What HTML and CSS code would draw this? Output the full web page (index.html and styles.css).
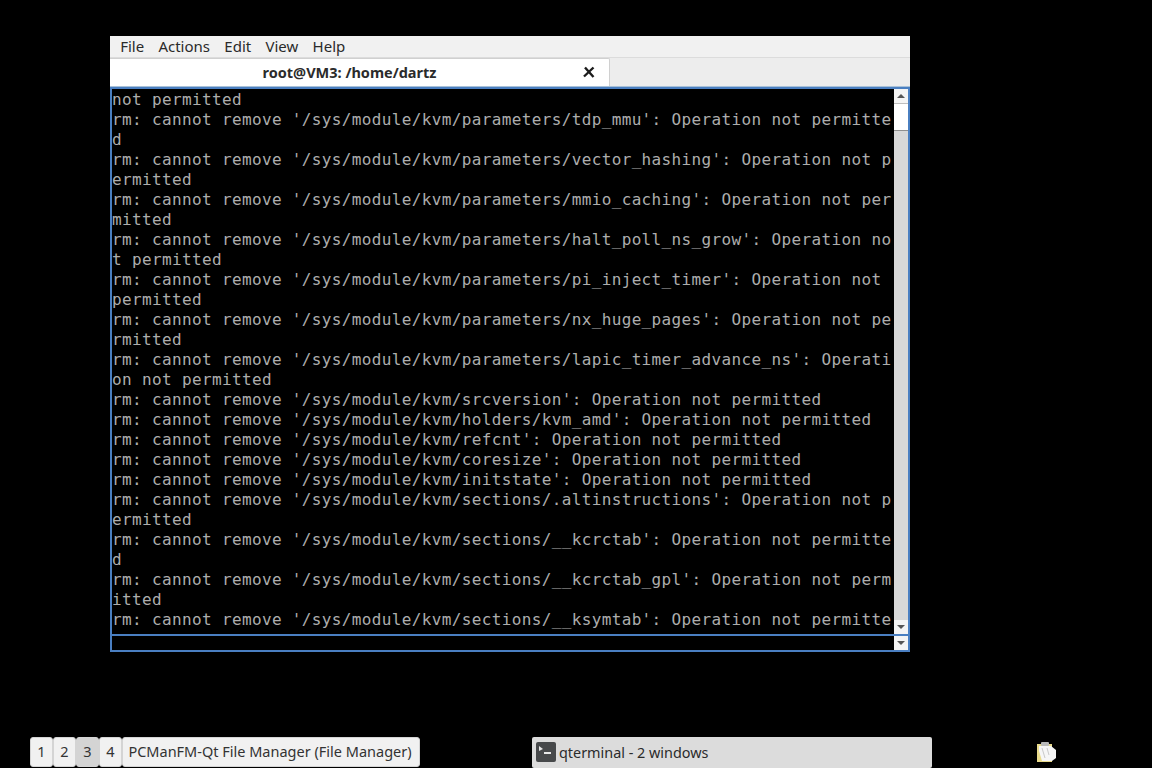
FILE: index.html
```html
<!DOCTYPE html>
<html lang="en">
<head>
<meta charset="utf-8">
<title>qterminal</title>
<link rel="stylesheet" href="styles.css">
</head>
<body>
<main class="desktop">
  <section class="window">
    <nav class="menubar">
      <span class="menu-item">File</span>
      <span class="menu-item">Actions</span>
      <span class="menu-item">Edit</span>
      <span class="menu-item">View</span>
      <span class="menu-item">Help</span>
    </nav>
    <div class="tabbar">
      <div class="tab">
        <span class="tab-title">root@VM3: /home/dartz</span>
        <svg class="tab-close" width="14" height="14" viewBox="0 0 14 14"><path d="M3 2.5 L11.5 12 M11.5 2.5 L2 11.5" stroke="#1c1c1c" stroke-width="2.4" fill="none"/></svg>
      </div>
    </div>
    <div class="terminal">
<pre class="output">not permitted
rm: cannot remove '/sys/module/kvm/parameters/tdp_mmu': Operation not permitte
d
rm: cannot remove '/sys/module/kvm/parameters/vector_hashing': Operation not p
ermitted
rm: cannot remove '/sys/module/kvm/parameters/mmio_caching': Operation not per
mitted
rm: cannot remove '/sys/module/kvm/parameters/halt_poll_ns_grow': Operation no
t permitted
rm: cannot remove '/sys/module/kvm/parameters/pi_inject_timer': Operation not
permitted
rm: cannot remove '/sys/module/kvm/parameters/nx_huge_pages': Operation not pe
rmitted
rm: cannot remove '/sys/module/kvm/parameters/lapic_timer_advance_ns': Operati
on not permitted
rm: cannot remove '/sys/module/kvm/srcversion': Operation not permitted
rm: cannot remove '/sys/module/kvm/holders/kvm_amd': Operation not permitted
rm: cannot remove '/sys/module/kvm/refcnt': Operation not permitted
rm: cannot remove '/sys/module/kvm/coresize': Operation not permitted
rm: cannot remove '/sys/module/kvm/initstate': Operation not permitted
rm: cannot remove '/sys/module/kvm/sections/.altinstructions': Operation not p
ermitted
rm: cannot remove '/sys/module/kvm/sections/__kcrctab': Operation not permitte
d
rm: cannot remove '/sys/module/kvm/sections/__kcrctab_gpl': Operation not perm
itted
rm: cannot remove '/sys/module/kvm/sections/__ksymtab': Operation not permitte</pre>
      <div class="scrollbar">
        <div class="sb-btn"><span class="arrow-up"></span></div>
        <div class="sb-thumb"></div>
        <div class="sb-track"></div>
        <div class="sb-btn"><span class="arrow-down"></span></div>
      </div>
    </div>
    <div class="inputbar">
      <div class="input-field"></div>
      <div class="sb-btn combo"><span class="arrow-down"></span></div>
    </div>
  </section>
  <footer class="panel">
    <div class="pager">
      <span class="desk">1</span>
      <span class="desk">2</span>
      <span class="desk active">3</span>
      <span class="desk">4</span>
      <span class="desk app">PCManFM-Qt File Manager (File Manager)</span>
    </div>
    <div class="task">
      <svg class="task-icon" width="20" height="20" viewBox="0 0 20 20"><rect width="20" height="20" rx="2" fill="#47494b"/><path d="M3 4 L7 7 L3 9" fill="#e8e8e8"/><rect x="8" y="10" width="7" height="2" fill="#e8e8e8"/></svg>
      <span>qterminal - 2 windows</span>
    </div>
    <svg class="tray" width="22" height="22" viewBox="0 0 22 22">
      <rect x="1" y="3" width="15" height="18" fill="#eadb8c"/>
      <rect x="5" y="1" width="8" height="4" rx="1" fill="#b9b9b9"/>
      <path d="M3 5 H15 L20 9 V17 L16 20 H6 L3 10 Z" fill="#f6f6f6"/>
      <path d="M6 7 L9 17 M11 7 L13 14" stroke="#c9c9c9" stroke-width="1" fill="none"/>
    </svg>
  </footer>
</main>
</body>
</html>
```
FILE: styles.css
```css
* { box-sizing: border-box; }
html, body { margin: 0; padding: 0; background: #000; }
.desktop {
  width: 1152px;
  height: 768px;
  padding: 36px 0 0 0;
  display: flex;
  flex-direction: column;
  overflow: hidden;
  font-family: "Noto Sans", "Open Sans", sans-serif;
}
.window {
  width: 800px;
  height: 616px;
  margin-left: 110px;
  background: #efefef;
  display: flex;
  flex-direction: column;
}
.menubar {
  height: 22px;
  flex: none;
  display: flex;
  align-items: center;
  padding: 0 0 2px 3px;
  font-size: 15px;
  color: #2a2a2a;
  background: #f1f1f1;
  border-bottom: 1px solid #dcdcdc;
}
.menu-item { padding: 0 7.15px; }
.tabbar {
  height: 29px;
  flex: none;
  display: flex;
  background: #ededed;
  border-bottom: 1px solid #a9c1d8;
}
.tab {
  width: 500px;
  height: 28px;
  background: #fff;
  border: 1px solid #d0d0d0;
  border-bottom: 0;
  border-left: 0;
  border-radius: 0 2px 0 0;
  display: flex;
  align-items: center;
  position: relative;
  justify-content: center;
  padding: 0 20px 2px 0;
}
.tab-title {
  font-size: 14.5px;
  font-weight: 700;
  color: #2b2b2b;
}
.tab-close { position: absolute; right: 13px; top: 6px; }
.terminal {
  height: 549px;
  flex: none;
  background: #000;
  border: 2px solid #4a7fc1;
  display: flex;
}
.output {
  flex: 1;
  margin: 0;
  padding: 1px 0 0;
  overflow: hidden;
  font-family: "DejaVu Sans Mono", "Liberation Mono", monospace;
  font-size: 16px;
  letter-spacing: 0.36px;
  line-height: 20px;
  color: #adadad;
  white-space: pre;
}
.scrollbar {
  width: 14px;
  flex: none;
  display: flex;
  flex-direction: column;
  background: #d6d6d6;
}
.sb-btn {
  width: 14px;
  height: 14px;
  flex: none;
  background: #f4f4f4;
  display: flex;
  align-items: center;
  justify-content: center;
}
.sb-thumb {
  height: 28px;
  background: #fff;
  border-top: 1px solid #bdbdbd;
  border-bottom: 1px solid #8f8f8f;
}
.sb-track { flex: 1; background: #d8d8d8; }
.arrow-up, .arrow-down { width: 0; height: 0; border-left: 4px solid transparent; border-right: 4px solid transparent; }
.arrow-up { border-bottom: 4px solid #555; }
.arrow-down { border-top: 4px solid #555; }
.inputbar {
  height: 16px;
  flex: none;
  display: flex;
  background: #000;
  border: 2px solid #4a7fc1;
  border-top: 0;
}
.input-field { flex: 1; }
.combo { height: 14px; }
.panel {
  margin-top: 85px;
  height: 31px;
  display: flex;
  align-items: flex-start;
  padding-left: 30px;
}
.pager { display: flex; height: 30px; font-size: 14.5px; color: #333; line-height: 1; }
.desk {
  width: 23px;
  display: flex;
  align-items: center;
  justify-content: center;
  padding-bottom: 1px;
  background: #f1f1f1;
  border: 1px solid #d4d4d4;
  border-radius: 3px;
}
.desk.active { background: #d4d4d4; }
.desk.app { width: 298px; padding-right: 2px; }
.task {
  margin-left: 112px;
  width: 400px;
  height: 31px;
  background: #dcdcdc;
  border-radius: 2px;
  display: flex;
  align-items: center;
  gap: 3px;
  padding: 0 0 1px 4px;
  font-size: 14.4px;
  color: #2b2b2b;
}
.tray { margin-left: 104px; margin-top: 4px; }
```
